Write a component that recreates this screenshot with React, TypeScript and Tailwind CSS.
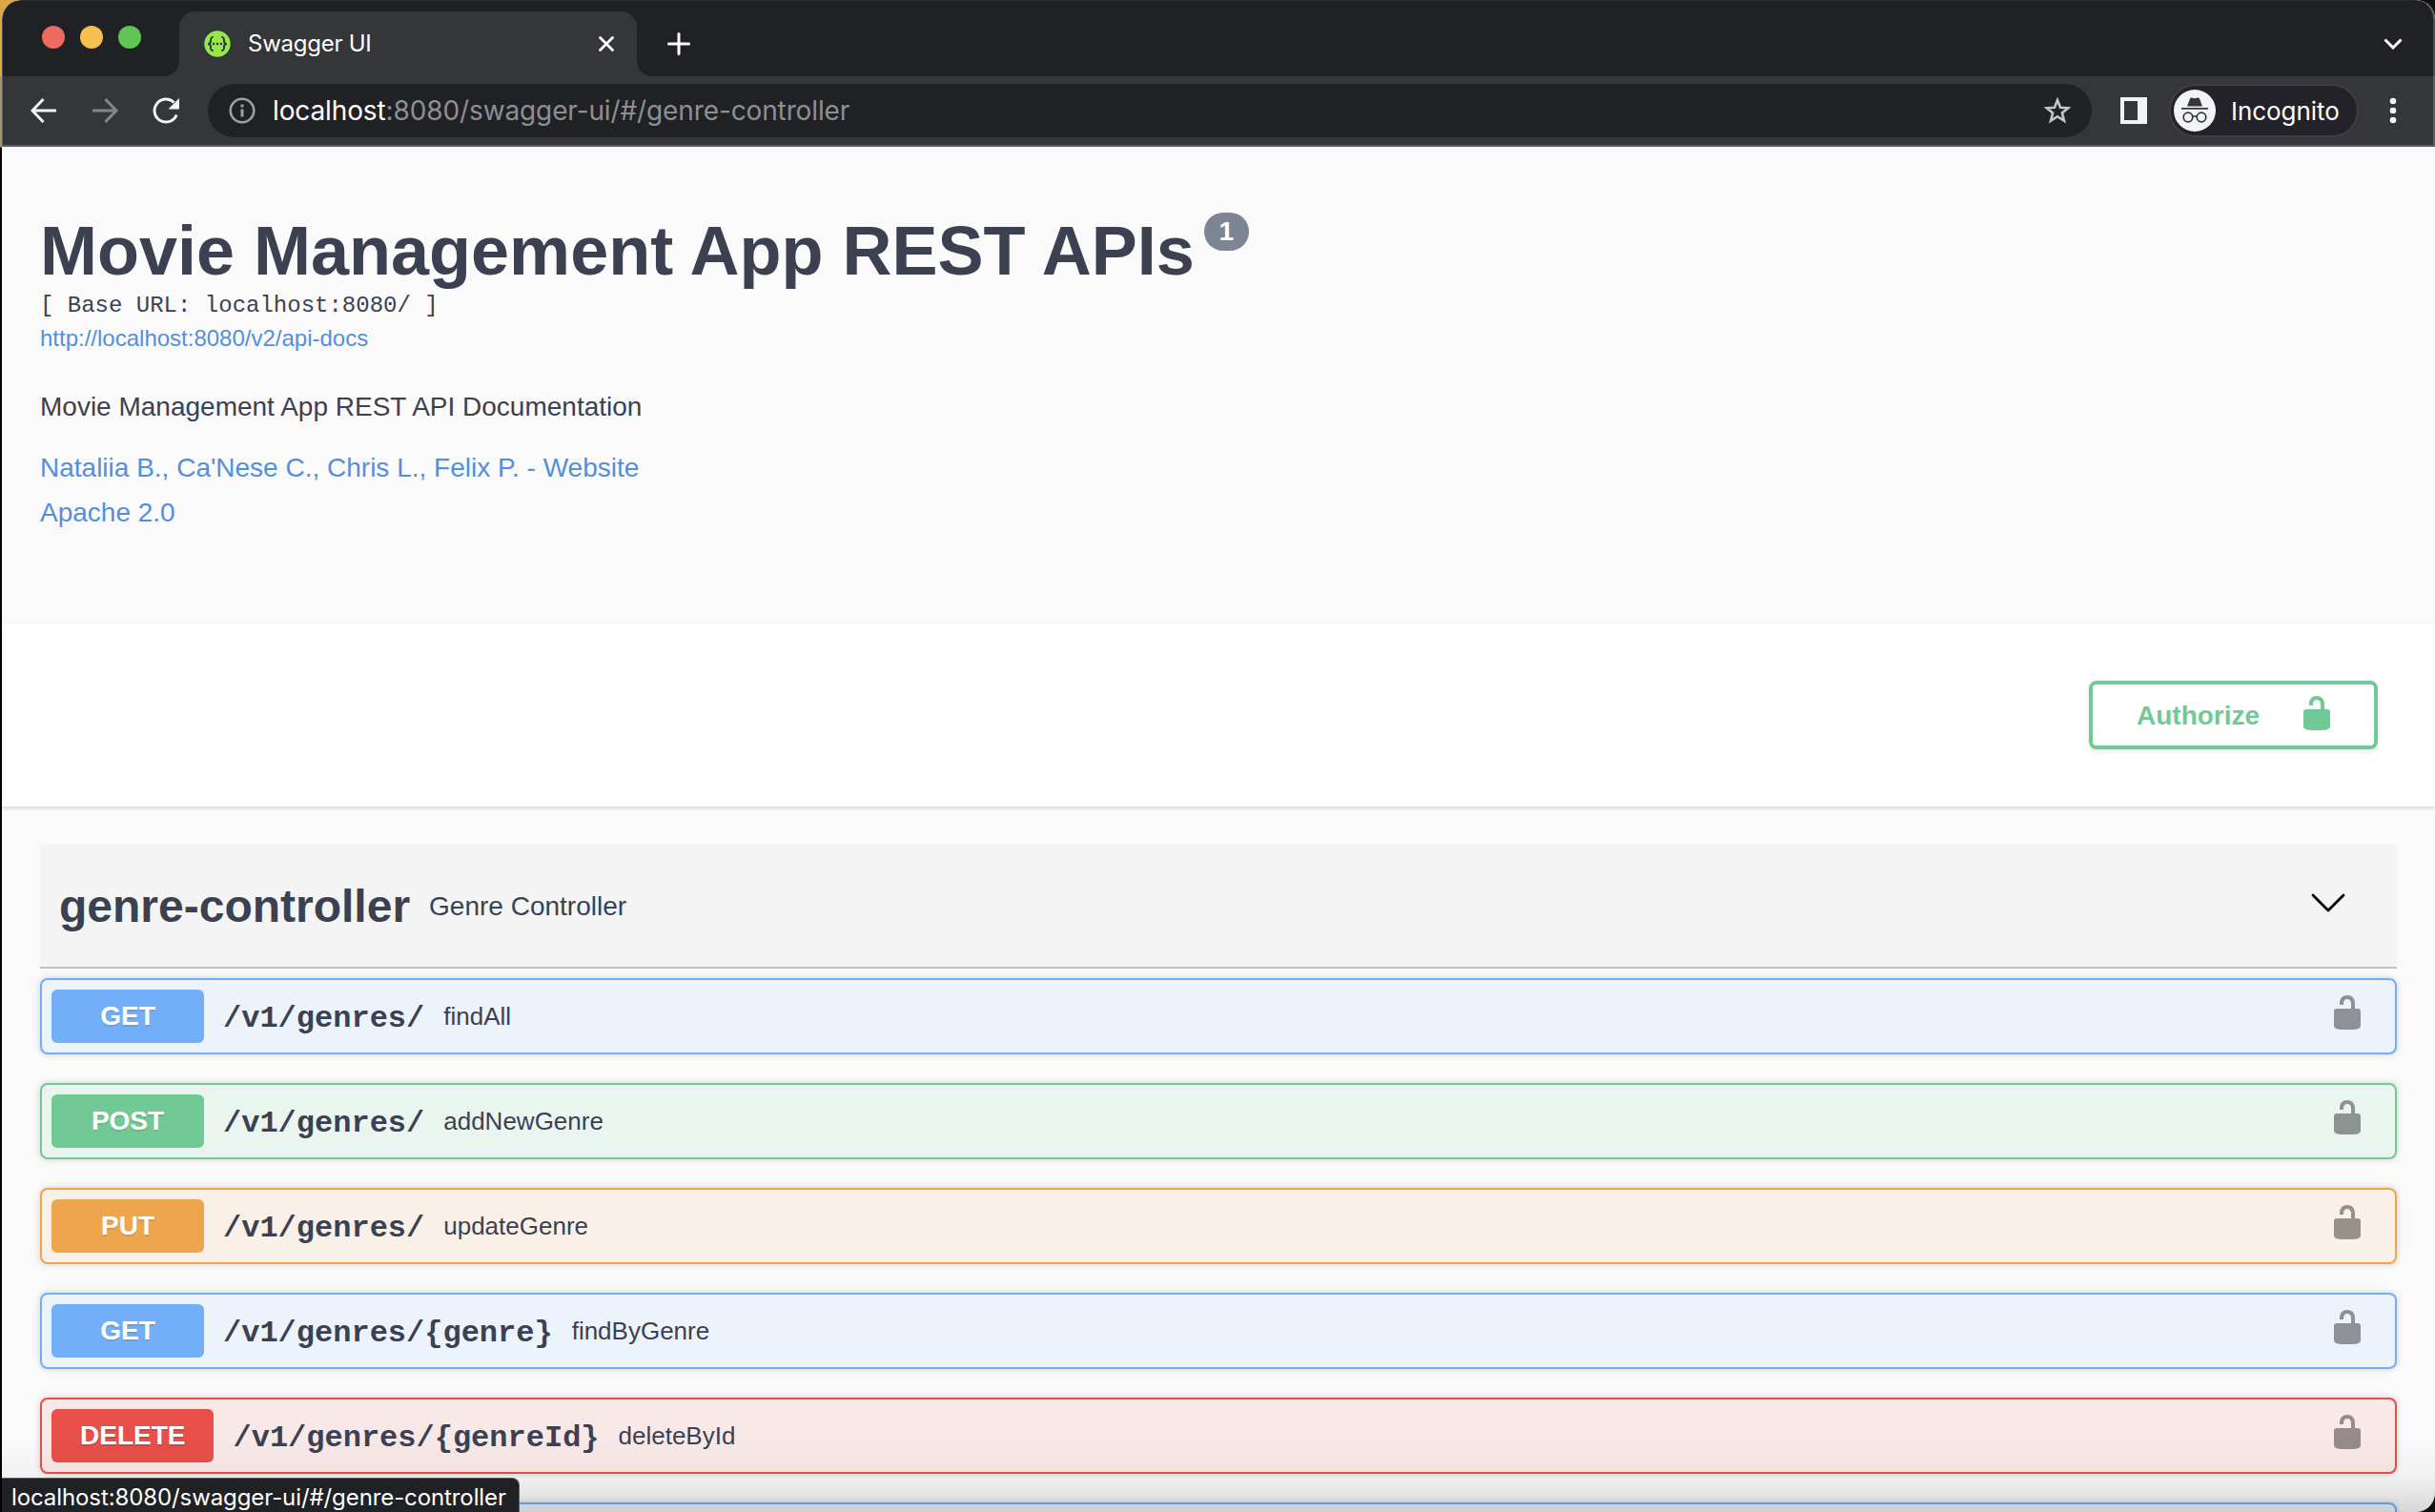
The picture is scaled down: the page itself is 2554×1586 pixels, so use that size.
const sans = "font-['Liberation_Sans',Arial,sans-serif]";
const mono = "font-['Liberation_Mono','Courier_New',monospace]";
const ui = "font-['Inter',Roboto,sans-serif]";

function UnlockIcon({ className }: { className: string }) {
  return (
    <svg viewBox="0 0 28 36" className={className} fill="currentColor">
      <path d="M3 14h15V9c0-3.200-1.500-5-4-5s-4 1.800-4 5v1H6V8.500C6 3.200 9.200 0 14 0s8 3.200 8 8.500V14h3q3 0 3 3v15q0 4-9 4H9q-9 0-9-4V17q0-3 3-3Z" />
    </svg>
  );
}

function Favicon() {
  return (
    <svg viewBox="0 0 30 30" className="size-[30px]">
      <circle cx="15" cy="15" r="14.300" fill="#9be54a" stroke="#1d3a40" strokeWidth="1.200" />
      <g fill="none" stroke="#1d3a40" strokeWidth="1.900">
        <path d="M10.800 7.900C8 7.900 8 9.500 8 11.500S7.600 15 5.200 15c2.400 0 2.800 1.500 2.800 3.500s0 3.600 2.800 3.600" />
        <path d="M19.200 7.900c2.800 0 2.800 1.600 2.800 3.600s.4 3.500 2.800 3.500c-2.400 0-2.800 1.500-2.800 3.500s0 3.600-2.800 3.600" />
      </g>
      <g fill="#1d3a40">
        <circle cx="11" cy="15" r="1.200" />
        <circle cx="15" cy="15" r="1.200" />
        <circle cx="19" cy="15" r="1.200" />
      </g>
    </svg>
  );
}

function TabStrip() {
  return (
    <div className="flex h-20 items-end rounded-t-[20px] border-t border-r-2 border-l border-[#4c4d51] border-t-[#2c2d30] bg-[#202124]">
      <div className="flex h-[79px] w-[185px] shrink-0 items-center gap-4 pb-[3px] pl-[41px]">
        <span className="size-6 rounded-full bg-[#ed6a5e]" />
        <span className="size-6 rounded-full bg-[#f5bf4f]" />
        <span className="size-6 rounded-full bg-[#61c554]" />
      </div>
      <div className="relative flex h-[68px] w-[480px] shrink-0 items-center rounded-t-2xl bg-[#35363a] pr-6 pl-[25px]">
        <svg viewBox="0 0 16 16" className="absolute bottom-0 -left-4 size-4" fill="#35363a">
          <path d="M16 0v16H0A16 16 0 0 0 16 0Z" />
        </svg>
        <svg viewBox="0 0 16 16" className="absolute -right-4 bottom-0 size-4" fill="#35363a">
          <path d="M0 0v16h16A16 16 0 0 1 0 0Z" />
        </svg>
        <Favicon />
        <span className="ml-[17px] text-2xl leading-8 tracking-[-0.25px] whitespace-nowrap text-white">Swagger UI</span>
        <svg viewBox="0 0 16 16" className="ml-auto size-4" stroke="#fff" strokeWidth="2.800" strokeLinecap="round">
          <path d="M1.500 1.500l13 13M14.500 1.500l-13 13" />
        </svg>
      </div>
      <svg viewBox="0 0 24 24" className="mb-[22px] ml-[32px] size-6" stroke="#fff" strokeWidth="3" strokeLinecap="round">
        <path d="M12 1.500v21M1.500 12h21" />
      </svg>
      <svg viewBox="0 0 20 12" className="mr-8 mb-7 ml-auto h-3 w-5" fill="none" stroke="#fff" strokeWidth="3">
        <path d="M1.500 1.500l8.500 8.500l8.500-8.500" />
      </svg>
    </div>
  );
}

function Toolbar() {
  return (
    <div className="flex h-[74px] items-center border-r-2 border-b-2 border-l border-[#5d5e62] bg-[#35363a] pl-[29px]">
      <svg viewBox="0 0 27 26" className="h-[26px] w-[27px]" fill="none" stroke="#f1f3f4" strokeWidth="3">
        <path d="M13.500 1L2 13l11.500 12M2 13h25" />
      </svg>
      <svg viewBox="0 0 27 26" className="ml-[38px] h-[26px] w-[27px]" fill="none" stroke="#85868a" strokeWidth="3">
        <path d="M13.500 1L25 13L13.500 25M25 13H0" />
      </svg>
      <svg viewBox="0 0 28 28" className="ml-[36px] size-7" fill="none">
        <path d="M25.200 18.500A12 12 0 1 1 22.500 5.500" stroke="#f1f3f4" strokeWidth="3" />
        <path d="M28 1v11.500H16.500Z" fill="#f1f3f4" />
      </svg>
      <div className="ml-[30px] flex h-14 w-[1976px] items-center rounded-full bg-[#202124] pr-[22px] pl-[22px]">
        <svg viewBox="0 0 28 28" className="size-7" fill="none" stroke="#9aa0a6" strokeWidth="2.600">
          <circle cx="14" cy="14" r="12.300" />
          <path d="M14 12.500v8M14 7.500v3" strokeWidth="3" />
        </svg>
        <span className="ml-[18px] text-[28px] leading-9 tracking-[-0.12px] whitespace-nowrap text-[#8e8f92]">
          <span className="text-white">localhost</span>:8080/swagger-ui/#/genre-controller
        </span>
        <svg viewBox="0 0 28 28" className="ml-auto size-7" fill="none" stroke="#c4c5c7" strokeWidth="2.600">
          <path d="M14 3l3 7.700l8.300.6l-6.400 5.200l2.100 8.200L14 20.200l-7 4.500l2.100-8.200l-6.400-5.200l8.300-.6Z" />
        </svg>
      </div>
      <svg viewBox="0 0 28 28" className="ml-[30px] size-7">
        <path fillRule="evenodd" fill="#f1f3f4" d="M0 0h28v28H0ZM4 4v20h14V4Z" />
      </svg>
      <div className="ml-[23px] flex h-14 w-[199px] items-center rounded-full border-2 border-[#3f4045] bg-[#232228] pl-[3px]">
        <svg viewBox="0 0 44 44" className="size-11">
          <circle cx="22" cy="22" r="22" fill="#f1f3f4" />
          <path d="M17 9.500q.5-1.500 2-1l2 .6q1 .3 2 0l2-.6q1.500-.5 2 1L30 17.500H14Z" fill="#35363a" />
          <path d="M8 19h28v1.800H8Z" fill="#35363a" />
          <g fill="none" stroke="#35363a" strokeWidth="1.700">
            <circle cx="15" cy="29" r="4.800" />
            <circle cx="29" cy="29" r="4.800" />
            <path d="M19.800 28.500q2.200-1.500 4.400 0" />
          </g>
        </svg>
        <span className="mt-0.5 ml-4 text-[26px] leading-9 tracking-[-0.05px] text-white">Incognito</span>
      </div>
      <svg viewBox="0 0 8 28" className="mr-[38px] ml-auto h-7 w-2" fill="#f1f3f4">
        <circle cx="4" cy="4" r="3.300" />
        <circle cx="4" cy="14" r="3.300" />
        <circle cx="4" cy="24" r="3.300" />
      </svg>
    </div>
  );
}

const get = { border: "border-[#73aef8] bg-[#ecf3fb]", fill: "bg-[#73aef8]", lock: "text-[#8e9196]" };
const post = { border: "border-[#71c995] bg-[#ebf5ef]", fill: "bg-[#71c995]", lock: "text-[#8d9390]" };
const put = { border: "border-[#efa54b] bg-[#f9f1e7]", fill: "bg-[#efa54b]", lock: "text-[#96918b]" };
const del = { border: "border-[#e74f48] bg-[#f8e8e7]", fill: "bg-[#e74f48]", lock: "text-[#968b8b]" };

const rows = [
  { method: "GET", path: "/v1/genres/", name: "findAll", theme: get },
  { method: "POST", path: "/v1/genres/", name: "addNewGenre", theme: post },
  { method: "PUT", path: "/v1/genres/", name: "updateGenre", theme: put },
  { method: "GET", path: "/v1/genres/{genre}", name: "findByGenre", theme: get },
  { method: "DELETE", path: "/v1/genres/{genreId}", name: "deleteById", theme: del },
];

function Operation({ row }: { row: (typeof rows)[number] }) {
  return (
    <div className={`flex h-20 shrink-0 items-center rounded-lg border-2 pr-9 pl-2.5 shadow-[0_0_6px_rgba(0,0,0,0.19)] ${row.theme.border}`}>
      <span
        className={`flex h-14 min-w-[160px] items-center justify-center rounded-md px-[30px] text-[28px] font-bold text-white [text-shadow:0_2px_0_rgba(0,0,0,0.1)] ${row.theme.fill}`}
      >
        {row.method}
      </span>
      <span className={`mt-[5px] ml-5 text-[32px] font-bold ${mono}`}>{row.path}</span>
      <span className="ml-5 text-[26px]">{row.name}</span>
      <UnlockIcon className={`mb-2 ml-auto h-9 w-7 ${row.theme.lock}`} />
    </div>
  );
}

function Info() {
  return (
    <div className="flex h-[500px] shrink-0 flex-col items-start pt-[68px] pl-10">
      <div className="flex items-start">
        <h1 className="text-[72px] leading-[82px] font-bold">Movie Management App REST APIs</h1>
        <span className="mt-px ml-[10px] flex h-10 w-[47px] items-center justify-center rounded-full bg-[#7d8492] text-[28px] font-bold text-white">
          1
        </span>
      </div>
      <pre className={`mt-[3px] text-2xl leading-7 ${mono}`}>[ Base URL: localhost:8080/ ]</pre>
      <a className="mt-1.5 text-2xl leading-7 text-[#548fdd]">http://localhost:8080/v2/api-docs</a>
      <p className="mt-[42px] text-[28px] leading-8">Movie Management App REST API Documentation</p>
      <a className="mt-8 text-[28px] leading-8 text-[#548fdd]">Nataliia B., Ca'Nese C., Chris L., Felix P. - Website</a>
      <a className="mt-[15px] text-[28px] leading-8 text-[#548fdd]">Apache 2.0</a>
    </div>
  );
}

export default function App() {
  return (
    <div className="flex h-[1586px] w-[2554px] overflow-hidden bg-[#111]">
      <div className="w-0.5 shrink-0 bg-[linear-gradient(to_bottom,#e0a64a_0,#e0a64a_80px,#a8936f_81px,#a8936f_154px,#000_155px)]" />
      <div className="h-[1586px] w-[2552px] bg-[linear-gradient(to_right,#e0a64a_0,#e0a64a_40px,#111_41px)]">
        <div className={`relative flex h-[1586px] w-[2552px] flex-col overflow-hidden rounded-t-[20px] rounded-br-[20px] bg-[#fafafa] text-[#3b4151] ${sans}`}>
          <div className={ui}>
            <TabStrip />
            <Toolbar />
          </div>
          <Info />
          <div className="flex h-48 shrink-0 items-center justify-end bg-white pr-[60px] shadow-[0_2px_4px_rgba(0,0,0,0.15)]">
            <button className="flex h-[72px] w-[303px] items-center rounded-lg border-4 border-[#71c995] pl-[46px] text-[#71c995] shadow-[0_2px_4px_rgba(0,0,0,0.1)]">
              <span className="mt-px text-[28px] leading-8 font-bold">Authorize</span>
              <UnlockIcon className="mr-[46px] mb-1 ml-auto h-9 w-7" />
            </button>
          </div>
          <div className="mt-10 flex flex-col px-10">
            <div className="flex h-[130px] shrink-0 items-center border-b-2 border-[#bfc0c4] bg-[#f4f4f4] pl-5">
              <h2 className="mt-px text-5xl font-bold">genre-controller</h2>
              <span className="mt-px ml-5 text-[28px]">Genre Controller</span>
              <svg
                viewBox="0 0 36 20"
                className="mr-[54px] mb-1.5 ml-auto h-5 w-9"
                fill="none"
                stroke="#000"
                strokeWidth="2.800"
                strokeLinecap="round"
                strokeLinejoin="round"
              >
                <path d="M2 2l16 16l16-16" />
              </svg>
            </div>
            <div className="mt-2.5 flex h-[560px] flex-col gap-[30px]">
              {rows.map((row) => (
                <Operation key={row.method + row.name} row={row} />
              ))}
              <div className="h-20 shrink-0 rounded-lg border-2 border-[#73aef8] bg-[#ecf3fb] shadow-[0_0_6px_rgba(0,0,0,0.19)]" />
            </div>
          </div>
          <div className="absolute inset-x-0 bottom-0 h-20 bg-linear-to-b from-transparent via-black/3 to-black/14" />
          <div
            className={`absolute bottom-0 left-0 flex h-9 w-[543px] items-center rounded-tr-lg border-t border-r border-[#5d5e62] bg-[#202124] pt-1 pl-2.5 text-2xl leading-8 tracking-[-0.1px] whitespace-nowrap text-white ${ui}`}
          >
            localhost:8080/swagger-ui/#/genre-controller
          </div>
        </div>
      </div>
    </div>
  );
}
